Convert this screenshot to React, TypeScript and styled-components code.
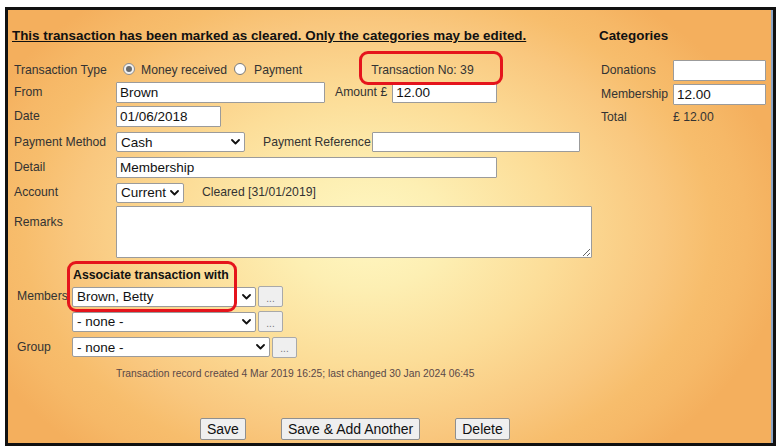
import React from 'react';
import styled, { createGlobalStyle } from 'styled-components';

const Global = createGlobalStyle`
  html, body { margin: 0; padding: 0; background: #fff; }
  body { font-family: "Liberation Sans", Arial, sans-serif; color: #2b2b2b; }
`;

const Frame = styled.div`
  box-sizing: border-box;
  margin: 7px 0 0 5px;
  width: 771px;
  height: 439px;
  border: 3px solid #111;
  box-shadow: inset -2px 0 0 #8da6c6;
  background: radial-gradient(ellipse 55% 69% at 47% 51%, #fff7c2 0%, #fdefb3 19%, #fcdd98 45%, #f9c77e 70%, #f7bd6c 82%, #f6b867 90%, #f4af5d 100%);
  display: flex;
`;

const Main = styled.div`
  width: 591px;
  flex-shrink: 0;
  box-sizing: border-box;
  padding-left: 6px;
  display: flex;
  flex-direction: column;
`;

const Heading = styled.div<{ $underline?: boolean; $shift?: number }>`
  height: 49px;
  box-sizing: border-box;
  padding-top: 18px;
  margin-left: ${p => p.$shift ?? 0}px;
  font-size: 13.4px;
  font-weight: bold;
  line-height: 15px;
  color: #111;
  white-space: nowrap;
  text-decoration: ${p => (p.$underline ? 'underline' : 'none')};
`;

const Row = styled.div<{ $h: number; $top?: boolean; $pl?: number }>`
  display: flex;
  align-items: ${p => (p.$top ? 'flex-start' : 'center')};
  height: ${p => p.$h}px;
  padding-left: ${p => p.$pl ?? 0}px;
  font-size: 12.2px;
  line-height: 15px;
  color: #333;
  white-space: nowrap;
`;

const Label = styled.div<{ $w?: number; $mt?: number }>`
  width: ${p => p.$w ?? 102}px;
  margin-top: ${p => p.$mt ?? 0}px;
  flex-shrink: 0;
`;

const Text = styled.span<{ $ml?: number }>`
  margin-left: ${p => p.$ml ?? 0}px;
`;

const TextInput = styled.input<{ $w: number; $h?: number; $ml?: number }>`
  box-sizing: border-box;
  width: ${p => p.$w}px;
  height: ${p => p.$h ?? 21}px;
  margin: 0 0 0 ${p => p.$ml ?? 0}px;
  padding: 0 3px;
  border: 1px solid #9b9b9b;
  border-radius: 1px;
  background: #fff;
  font-family: "Liberation Sans", Arial, sans-serif;
  font-size: 13.5px;
  color: #111;
  outline: none;
`;

const TextArea = styled.textarea<{ $w: number; $h: number }>`
  box-sizing: border-box;
  width: ${p => p.$w}px;
  height: ${p => p.$h}px;
  margin: 1px 0 0 0;
  padding: 2px 3px;
  border: 1px solid #9b9b9b;
  border-radius: 1px;
  background: #fff;
  font-family: "Liberation Sans", Arial, sans-serif;
  font-size: 13.5px;
  outline: none;
`;

const SelectBox = styled.div<{ $w: number; $h?: number }>`
  box-sizing: border-box;
  display: flex;
  align-items: center;
  width: ${p => p.$w}px;
  height: ${p => p.$h ?? 20}px;
  border: 1px solid #9b9b9b;
  border-radius: 2px;
  background: #fff;
  flex-shrink: 0;
`;

const NativeSelect = styled.select`
  appearance: none;
  -webkit-appearance: none;
  flex: 1;
  min-width: 0;
  height: 100%;
  border: none;
  background: transparent;
  padding: 0 0 0 4px;
  margin: 0;
  font-family: "Liberation Sans", Arial, sans-serif;
  font-size: 13.5px;
  color: #111;
  outline: none;
`;

const Chevron = styled.svg`
  width: 9px;
  height: 6px;
  margin-right: 4px;
  flex-shrink: 0;
`;

const Select = ({ w, h, value }: { w: number; h?: number; value: string }) => (
  <SelectBox $w={w} $h={h}>
    <NativeSelect defaultValue={value}>
      <option>{value}</option>
    </NativeSelect>
    <Chevron viewBox="0 0 9 6">
      <path d="M1 1 L4.5 4.5 L8 1" fill="none" stroke="#111" strokeWidth="1.8" strokeLinecap="round" strokeLinejoin="round" />
    </Chevron>
  </SelectBox>
);

const Radio = styled.span<{ $checked?: boolean; $ml: number }>`
  box-sizing: border-box;
  width: 12px;
  height: 12px;
  margin: -2px 0 0 ${p => p.$ml}px;
  border-radius: 50%;
  border: 1px solid ${p => (p.$checked ? '#8c8c8c' : '#7a7a7a')};
  background: ${p => (p.$checked ? '#f1f1f1' : '#fff')};
  display: inline-flex;
  align-items: center;
  justify-content: center;
  flex-shrink: 0;
  &::after {
    content: '';
    width: 6px;
    height: 6px;
    border-radius: 50%;
    background: ${p => (p.$checked ? '#6a6a6a' : 'transparent')};
  }
`;

const Marked = styled.span<{ $ml?: number }>`
  position: relative;
  display: inline-block;
  margin-left: ${p => p.$ml ?? 0}px;
`;

const Callout = styled.span<{ $t: number; $l: number; $w: number; $h: number }>`
  position: absolute;
  top: ${p => p.$t}px;
  left: ${p => p.$l}px;
  width: ${p => p.$w}px;
  height: ${p => p.$h}px;
  box-sizing: border-box;
  border: 3px solid #e5141c;
  border-radius: 9px;
  pointer-events: none;
  z-index: 2;
`;

const AssocBlock = styled.div`
  position: relative;
  margin-left: 3px;
  display: flex;
  flex-direction: column;
`;

const AssocTitle = styled.div`
  height: 24px;
  box-sizing: border-box;
  padding: 6px 0 0 56px;
  display: flex;
  align-items: center;
  font-size: 12.3px;
  font-weight: bold;
  color: #111;
  white-space: nowrap;
`;

const DotsButton = styled.button`
  box-sizing: border-box;
  width: 25px;
  height: 21px;
  margin-left: 2px;
  padding: 4px 0 0;
  border: 1px solid #a9a9a9;
  border-radius: 2px;
  background: #efefef;
  color: #777;
  font-family: "Liberation Sans", Arial, sans-serif;
  font-size: 10px;
  line-height: 10px;
`;

const Info = styled.div`
  height: 26px;
  display: flex;
  align-items: center;
  padding-left: 102px;
  font-size: 10.3px;
  color: #5a4848;
  white-space: nowrap;
`;

const ButtonBar = styled.div`
  display: flex;
  gap: 35px;
  margin-top: 32px;
  padding-left: 186px;
`;

const Button = styled.button`
  box-sizing: border-box;
  height: 22px;
  padding: 0 6px;
  border: 1px solid #8f8f8f;
  border-radius: 2px;
  background: #efefef;
  color: #111;
  font-family: "Liberation Sans", Arial, sans-serif;
  font-size: 14px;
`;

const Side = styled.div`
  flex: 1;
  display: flex;
  flex-direction: column;
`;

export default function App() {
  return (
    <>
      <Global />
      <Frame>
        <Main>
          <Heading $underline $shift={-2}>
            This transaction has been marked as cleared. Only the categories may be edited.
          </Heading>
          <Row $h={22}>
            <Label>Transaction Type</Label>
            <Radio $checked $ml={7} />
            <Text $ml={6}>Money received</Text>
            <Radio $ml={7} />
            <Text $ml={8}>Payment</Text>
            <Marked $ml={69}>
              Transaction No: 39
              <Callout $t={-12} $l={-12} $w={144} $h={34} />
            </Marked>
          </Row>
          <Row $h={23}>
            <Label>From</Label>
            <TextInput $w={209} defaultValue="Brown" />
            <Text $ml={10}>Amount £</Text>
            <TextInput $w={105} $h={20} $ml={5} defaultValue="12.00" />
          </Row>
          <Row $h={25}>
            <Label>Date</Label>
            <TextInput $w={105} defaultValue="01/06/2018" />
          </Row>
          <Row $h={26}>
            <Label>Payment Method</Label>
            <Select w={129} value="Cash" />
            <Text $ml={18}>Payment Reference</Text>
            <TextInput $w={208} $h={20} $ml={1} />
          </Row>
          <Row $h={25}>
            <Label>Detail</Label>
            <TextInput $w={381} defaultValue="Membership" />
          </Row>
          <Row $h={25}>
            <Label>Account</Label>
            <Select w={68} value="Current" />
            <Text $ml={18}>Cleared [31/01/2019]</Text>
          </Row>
          <Row $h={55} $top>
            <Label $mt={10}>Remarks</Label>
            <TextArea $w={476} $h={52} />
          </Row>
          <AssocBlock>
            <AssocTitle>Associate transaction with</AssocTitle>
            <Row $h={25}>
              <Label $w={55}>Members</Label>
              <Select w={184} value="Brown, Betty" />
              <DotsButton>...</DotsButton>
            </Row>
            <Row $h={25}>
              <Label $w={55} />
              <Select w={184} value="- none -" />
              <DotsButton>...</DotsButton>
            </Row>
            <Row $h={26}>
              <Label $w={55}>Group</Label>
              <Select w={198} value="- none -" />
              <DotsButton>...</DotsButton>
            </Row>
            <Callout $t={1} $l={50} $w={170} $h={51} />
          </AssocBlock>
          <Info>Transaction record created 4 Mar 2019 16:25; last changed 30 Jan 2024 06:45</Info>
          <ButtonBar>
            <Button>Save</Button>
            <Button>Save &amp; Add Another</Button>
            <Button>Delete</Button>
          </ButtonBar>
        </Main>
        <Side>
          <Heading>Categories</Heading>
          <Row $h={23} $pl={2}>
            <Label $w={72}>Donations</Label>
            <TextInput $w={93} />
          </Row>
          <Row $h={25} $pl={2}>
            <Label $w={72}>Membership</Label>
            <TextInput $w={93} defaultValue="12.00" />
          </Row>
          <Row $h={20} $pl={2}>
            <Label $w={72}>Total</Label>
            <Text>£ 12.00</Text>
          </Row>
        </Side>
      </Frame>
    </>
  );
}
